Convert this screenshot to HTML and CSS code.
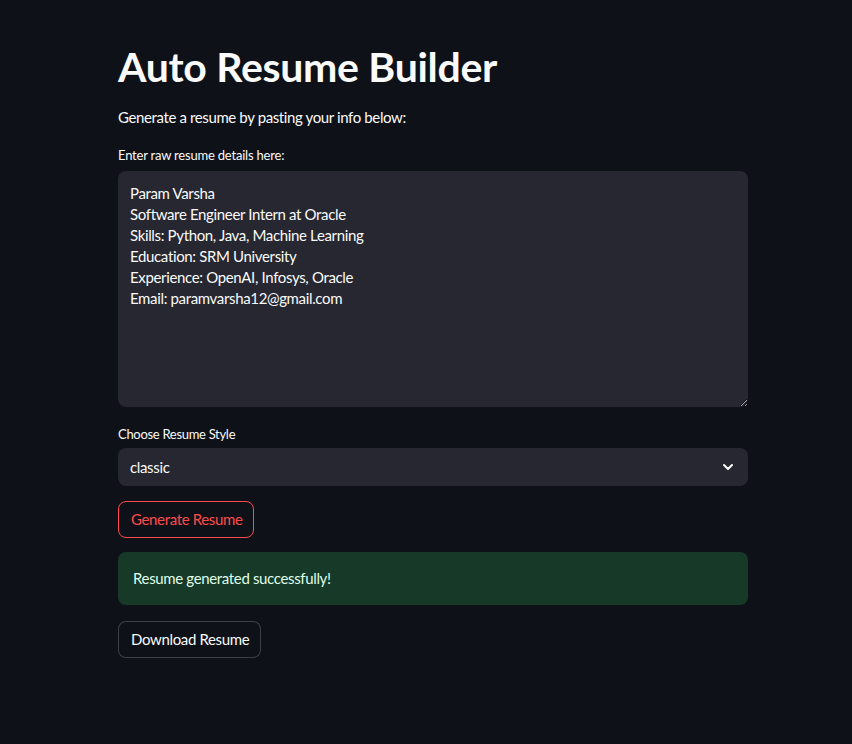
FILE: index.html
```html
<!DOCTYPE html>
<html lang="en">
<head>
<meta charset="utf-8">
<title>Auto Resume Builder</title>
<link rel="stylesheet" href="styles.css">
</head>
<body>
<main class="app">
  <h1 class="title">Auto Resume Builder</h1>
  <p class="intro">Generate a resume by pasting your info below:</p>

  <label class="field-label" for="raw">Enter raw resume details here:</label>
  <div class="textarea-wrap">
    <textarea id="raw" class="textarea">Param Varsha
Software Engineer Intern at Oracle
Skills: Python, Java, Machine Learning
Education: SRM University
Experience: OpenAI, Infosys, Oracle
Email: paramvarsha12@gmail.com</textarea>
  </div>

  <div class="field-label label-select">Choose Resume Style</div>
  <div class="select">
    <span class="select-value">classic</span>
    <svg class="chevron" width="16" height="16" viewBox="0 0 24 24" fill="none" stroke="#fafafa" stroke-width="3" stroke-linecap="round" stroke-linejoin="round"><path d="M6 9l6 6 6-6"/></svg>
  </div>

  <button class="btn btn-primary">Generate Resume</button>

  <div class="alert-success">Resume generated successfully!</div>

  <button class="btn btn-secondary">Download Resume</button>
</main>
</body>
</html>
```

FILE: styles.css
```css
* { box-sizing: border-box; }
html, body {
  margin: 0;
  padding: 0;
  background: #0e1117;
  color: #fafafa;
  font-family: "Lato", "Noto Sans", sans-serif;
}
body { min-height: 744px; }
.app {
  width: 630px;
  margin-left: 118px;
  padding-top: 41px;
  display: flex;
  flex-direction: column;
  align-items: flex-start;
}
.title {
  margin: 0;
  font-size: 41px;
  line-height: 52px;
  font-weight: 700;
  letter-spacing: -0.3px;
  color: #fafafa;
}
.intro {
  margin: 12px 0 0;
  font-size: 15px;
  line-height: 24px;
  letter-spacing: -0.38px;
}
.field-label {
  margin-top: 16px;
  font-size: 13px;
  line-height: 20px;
  letter-spacing: -0.2px;
  color: #fafafa;
}
.label-select { margin-top: 17px; letter-spacing: -0.3px; }
.textarea-wrap {
  margin-top: 6px;
  width: 100%;
}
.textarea {
  display: block;
  width: 100%;
  height: 236px;
  background: #262730;
  color: #fafafa;
  border: none;
  border-radius: 8px;
  padding: 12px 12px;
  font-family: inherit;
  font-size: 15px;
  line-height: 21px;
  letter-spacing: -0.35px;
  resize: vertical;
  outline: none;
}
.select {
  margin-top: 4px;
  width: 100%;
  height: 38px;
  background: #262730;
  border-radius: 8px;
  display: flex;
  align-items: center;
  justify-content: space-between;
  padding: 0 12px;
  font-size: 15px;
  letter-spacing: -0.35px;
}
.btn {
  font-family: inherit;
  font-size: 15px;
  letter-spacing: -0.35px;
  height: 37px;
  padding: 0 10px 2px 12px;
  border-radius: 8px;
  background: #0e1117;
  cursor: pointer;
}
.btn-primary {
  margin-top: 15px;
  color: #ff4b4b;
  border: 1px solid #ff4b4b;
}
.alert-success {
  margin-top: 14px;
  width: 100%;
  height: 53px;
  border-radius: 8px;
  background: #173928;
  color: #dffde9;
  display: flex;
  align-items: center;
  padding: 0 15px 1px;
  font-size: 15px;
  letter-spacing: -0.35px;
}
.btn-secondary {
  margin-top: 16px;
  padding-right: 11px;
  color: #fafafa;
  border: 1px solid rgba(250, 250, 250, 0.2);
}
```
